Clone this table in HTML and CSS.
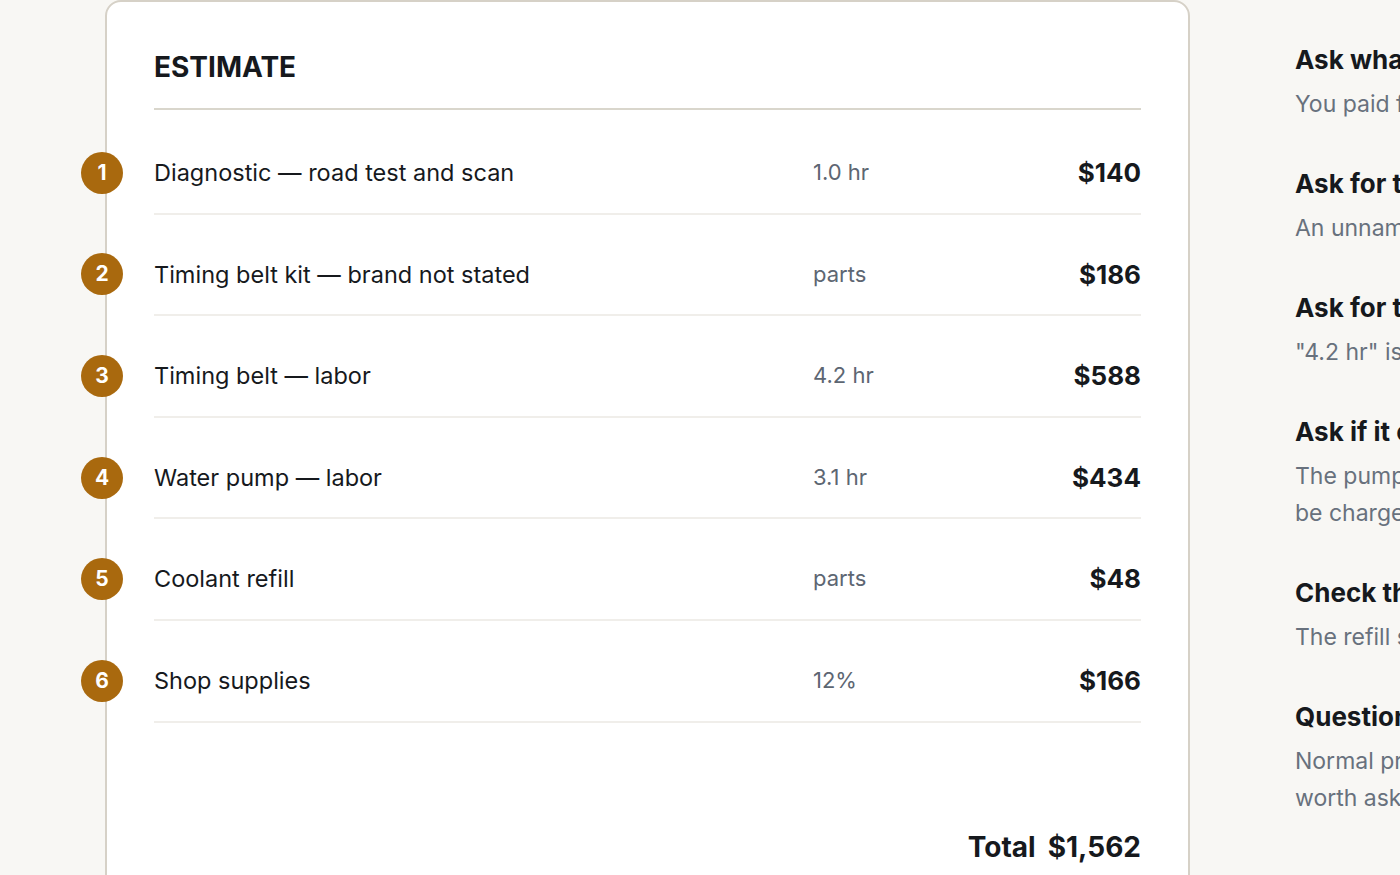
FILE: index.html
```html
<!DOCTYPE html>
<html lang="en">
<head>
  <meta charset="UTF-8" />
  <meta name="viewport" content="width=device-width, initial-scale=1.0"/>
  <title>Estimate review</title>
  <link rel="stylesheet" href="styles.css">
</head>
<body>

  <div class="page">
    <section class="estimate">
      <h1>ESTIMATE</h1>

      <ol class="lines">
        <li class="line">
          <span class="badge">1</span>
          <span class="desc">Diagnostic — road test and scan</span>
          <span class="meta">1.0 hr</span>
          <span class="price">$140</span>
        </li>
        <li class="line">
          <span class="badge">2</span>
          <span class="desc">Timing belt kit — brand not stated</span>
          <span class="meta">parts</span>
          <span class="price">$186</span>
        </li>
        <li class="line">
          <span class="badge">3</span>
          <span class="desc">Timing belt — labor</span>
          <span class="meta">4.2 hr</span>
          <span class="price">$588</span>
        </li>
        <li class="line">
          <span class="badge">4</span>
          <span class="desc">Water pump — labor</span>
          <span class="meta">3.1 hr</span>
          <span class="price">$434</span>
        </li>
        <li class="line">
          <span class="badge">5</span>
          <span class="desc">Coolant refill</span>
          <span class="meta">parts</span>
          <span class="price">$48</span>
        </li>
        <li class="line">
          <span class="badge">6</span>
          <span class="desc">Shop supplies</span>
          <span class="meta">12%</span>
          <span class="price">$166</span>
        </li>
      </ol>

      <div class="total">
        <span>Total</span>
        <span>$1,562</span>
      </div>
    </section>

    <aside class="notes">
      <div class="note">
        <h3>Ask what the scan found</h3>
        <p>You paid for a scan, so get the codes.</p>
      </div>
      <div class="note">
        <h3>Ask for the brand</h3>
        <p>An unnamed kit could be a budget brand.</p>
      </div>
      <div class="note">
        <h3>Ask for the book time</h3>
        <p>"4.2 hr" is worth checking against the guide.</p>
      </div>
      <div class="note">
        <h3>Ask if it overlaps</h3>
        <p>The pump sits behind the belt, so its labor should not
          be charged as a separate job.</p>
      </div>
      <div class="note">
        <h3>Check the coolant</h3>
        <p>The refill should match the coolant spec.</p>
      </div>
      <div class="note">
        <h3>Question the supplies fee</h3>
        <p>Normal practice is a flat fee, so 12% of the bill is
          worth asking about.</p>
      </div>
    </aside>
  </div>

</body>
</html>
```

FILE: styles.css
```css
html, body {
  overflow: hidden;
}

body {
  font-family: 'Inter', 'Noto Sans', sans-serif;
  background-color: #f8f7f4;
  color: #16191d;
  margin: 0;
}

.page {
  display: grid;
  grid-template-columns: 1085px 590px;
  gap: 105px;
  padding-left: 105px;
  width: max-content;
}

.estimate {
  background-color: #ffffff;
  border: 2px solid #d6d1c7;
  border-radius: 16px;
  padding: 48px 47px 40px;
  min-height: 900px;
  box-sizing: border-box;
}

.estimate h1 {
  font-size: 28px;
  font-weight: 700;
  line-height: 34px;
  margin: 0;
  padding-bottom: 24px;
  border-bottom: 2px solid #d9d6cc;
}

.lines {
  list-style: none;
  margin: 0;
  padding: 3px 0 0;
}

.line {
  position: relative;
  display: grid;
  grid-template-columns: 1fr 200px 128px;
  align-items: center;
  margin-top: 20px;
  padding: 22px 0;
  border-bottom: 2px solid #f0eeea;
  font-size: 23.5px;
  line-height: 35.6px;
}

.badge {
  position: absolute;
  left: -73px;
  top: 50%;
  transform: translateY(-50%);
  width: 42px;
  height: 42px;
  border-radius: 50%;
  background-color: #a9690e;
  color: #ffffff;
  font-size: 21px;
  font-weight: 700;
  line-height: 42px;
  text-align: center;
}

.meta {
  color: #5d6672;
  font-size: 22px;
}

.price {
  text-align: right;
  font-size: 26px;
  font-weight: 700;
}

.total {
  display: flex;
  justify-content: flex-end;
  gap: 12px;
  margin-top: 107px;
  font-size: 28px;
  font-weight: 700;
  line-height: 34px;
}

.notes {
  padding-top: 43px;
  display: flex;
  flex-direction: column;
  gap: 44px;
}

.note h3 {
  font-size: 26px;
  font-weight: 700;
  line-height: 34px;
  margin: 0 0 9px;
}

.note p {
  font-size: 23px;
  line-height: 37px;
  color: #68717d;
  margin: 0;
}
```
